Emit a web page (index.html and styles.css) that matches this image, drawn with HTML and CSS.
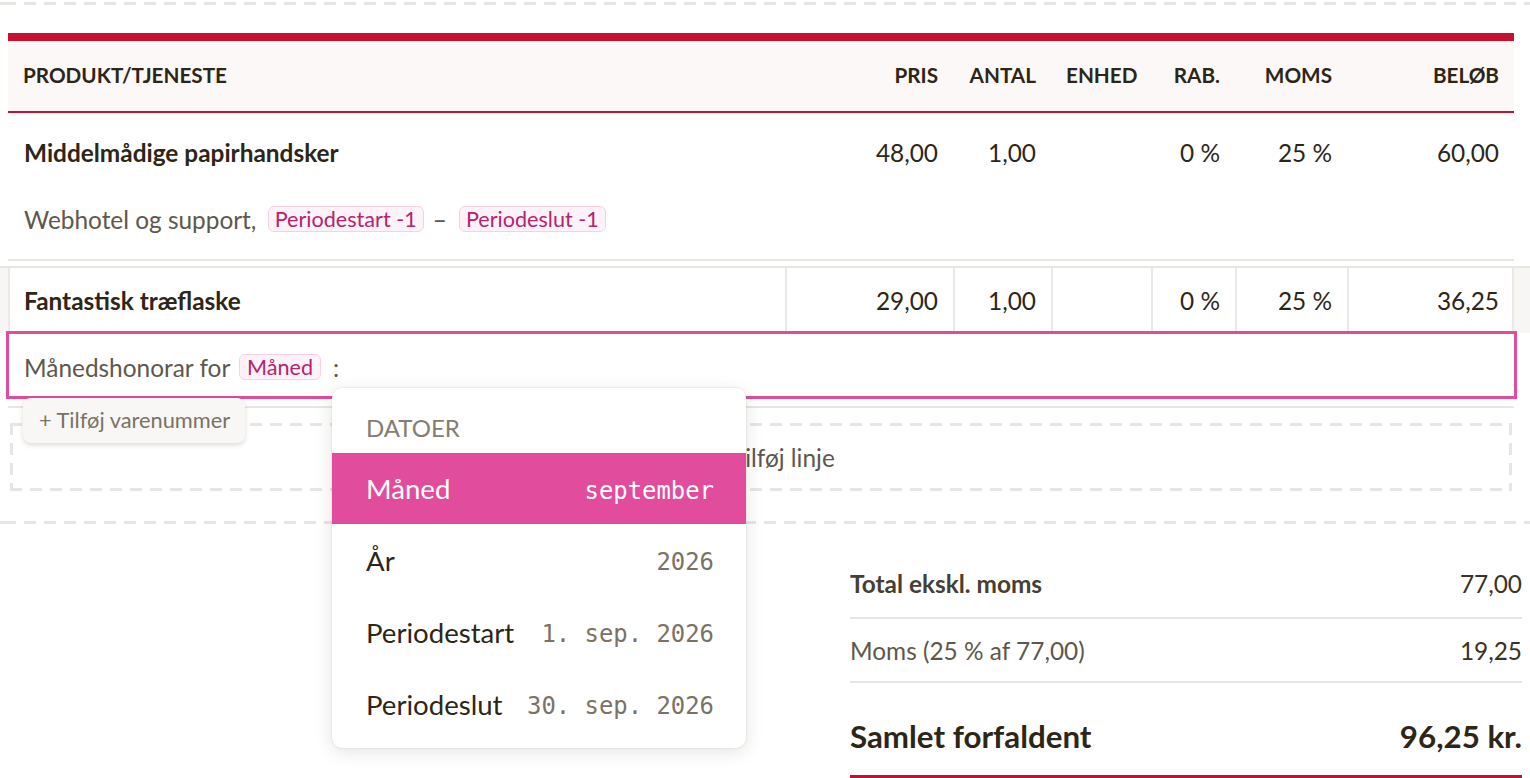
FILE: index.html
```html
<!DOCTYPE html>
<html lang="da">
<head>
<meta charset="utf-8">
<title>Faktura</title>
<link rel="stylesheet" href="styles.css">
</head>
<body>
<div class="dash-line"></div>
<div class="sheet">
  <div class="grid thead">
    <div class="c c-prod">Produkt/tjeneste</div>
    <div class="c">Pris</div>
    <div class="c">Antal</div>
    <div class="c">Enhed</div>
    <div class="c">Rab.</div>
    <div class="c">Moms</div>
    <div class="c">Beløb</div>
  </div>

  <div class="row1">
    <div class="grid main">
      <div class="c c-prod name">Middelmådige papirhandsker</div>
      <div class="c">48,00</div>
      <div class="c">1,00</div>
      <div class="c"></div>
      <div class="c">0 %</div>
      <div class="c">25 %</div>
      <div class="c">60,00</div>
    </div>
    <div class="desc">Webhotel og support, <span class="tag">Periodestart -1</span><span class="sep">–</span><span class="tag">Periodeslut -1</span></div>
  </div>

  <div class="row2">
    <div class="grid main cells">
      <div class="c c-prod name">Fantastisk træflaske</div>
      <div class="c">29,00</div>
      <div class="c">1,00</div>
      <div class="c"></div>
      <div class="c">0 %</div>
      <div class="c">25 %</div>
      <div class="c">36,25</div>
    </div>
  </div>
  <div class="desc focus">Månedshonorar for <span class="tag">Måned</span><span class="colon">:</span></div>
  <div class="row-end"></div>

  <button class="sku">+ Tilføj varenummer</button>

  <div class="add-line">+ Tilføj linje</div>

  <div class="dropdown">
    <div class="dd-label">Datoer</div>
    <div class="dd-item active"><span class="dd-name">Måned</span><span class="dd-val">september</span></div>
    <div class="dd-item"><span class="dd-name">År</span><span class="dd-val">2026</span></div>
    <div class="dd-item"><span class="dd-name">Periodestart</span><span class="dd-val">1. sep. 2026</span></div>
    <div class="dd-item"><span class="dd-name">Periodeslut</span><span class="dd-val">30. sep. 2026</span></div>
  </div>
</div>
<div class="dash-line bottom"></div>

<div class="summary">
  <div class="sum-row strong"><span class="lbl">Total ekskl. moms</span><span class="num">77,00</span></div>
  <div class="sum-row"><span>Moms (25 % af 77,00)</span><span class="num">19,25</span></div>
  <div class="sum-row total"><span>Samlet forfaldent</span><span>96,25 kr.</span></div>
</div>
</body>
</html>
```

FILE: styles.css
```css
* { box-sizing: border-box; }
html, body { margin: 0; padding: 0; background: #fff; }
body {
  font-family: Lato, "Noto Sans", sans-serif;
  color: #2d2617;
  width: 1530px;
  height: 778px;
  overflow: hidden;
}

.dash-line {
  height: 3px;
  margin-top: 2px;
  background: repeating-linear-gradient(90deg, #e8e6e2 0 12px, transparent 12px 20px);
  background-position: 4px 0;
}
.dash-line.bottom { margin-top: 30px; }

.sheet {
  position: relative;
  margin: 28px 16px 0 8px;
}

.grid {
  display: grid;
  grid-template-columns: 777px 168px 98px 100px 84px 112px 167px;
}

.c {
  padding: 0 15px;
  text-align: right;
  white-space: nowrap;
}
.c-prod { text-align: left; padding-left: 16px; }

.thead {
  height: 80px;
  border-top: 8px solid #c8102e;
  border-bottom: 2px solid #c8102e;
  background: #fcf8f7;
  align-items: center;
}
.thead .c {
  font-weight: 700;
  font-size: 20.7px;
  text-transform: uppercase;
  padding-bottom: 2px;
}
.thead .c-prod { padding-left: 15px; }

.main {
  align-items: center;
  font-size: 24.4px;
}
.name { font-weight: 700; }

.row1 { border-bottom: 2px solid #e8e6e2; }
.row1 .main { height: 78px; }

.desc {
  display: flex;
  align-items: center;
  height: 68px;
  padding: 0 16px 12px;
  font-size: 24.4px;
  color: #5e574d;
  white-space: pre;
}

.tag {
  display: inline-block;
  font-size: 21.6px;
  line-height: 22px;
  padding: 1px 6px;
  margin-left: 5px;
  color: #b3246f;
  background: #fdf2f8;
  border: 1px solid #f8d0e4;
  border-radius: 6px;
}
.sep { margin: 0 7px 0 9px; }
.colon { margin-left: 12px; }

.row2 {
  margin: 5px -16px 0 -8px;
  padding: 0 16px 0 8px;
  background: #f7f6f4;
  border-top: 2px solid #e8e6e2;
}
.cells { background: #fff; height: 65px; }
.cells .c {
  height: 100%;
  display: flex;
  align-items: center;
  justify-content: flex-end;
  border-left: 2px solid #ebe9e5;
}
.cells .c-prod { justify-content: flex-start; padding-left: 14px; }
.cells .c:last-child { border-right: 2px solid #ebe9e5; padding-right: 13px; }

.desc.focus {
  position: relative;
  z-index: 1;
  margin: -2px -3px 0 -2px;
  padding: 4px 15px 0;
  border: 3px solid #e14c9c;
  background: #fff;
}
.focus .tag { margin-left: 3px; padding: 1px 7px; }

.row-end {
  height: 2px;
  margin-top: 7px;
  background: #e8e6e2;
}

.sku {
  position: absolute;
  z-index: 2;
  left: 15px;
  top: 365px;
  width: 222px;
  height: 45px;
  padding: 0 0 2px 16px;
  text-align: left;
  font-family: Lato, sans-serif;
  font-size: 21.8px;
  color: #7a7266;
  background: #f9f7f5;
  border: 0;
  border-radius: 8px;
  box-shadow: 0 2px 5px rgba(60, 50, 30, 0.18);
}

.add-line {
  display: flex;
  align-items: center;
  justify-content: center;
  height: 68px;
  margin: 15px 2px 0;
  padding-left: 24px;
  font-size: 24.4px;
  color: #5e574d;
  background:
    repeating-linear-gradient(90deg, #e8e6e2 0 12px, transparent 12px 20px) left top / 100% 3px no-repeat,
    repeating-linear-gradient(90deg, #e8e6e2 0 12px, transparent 12px 20px) left bottom / 100% 3px no-repeat,
    repeating-linear-gradient(180deg, #e8e6e2 0 12px, transparent 12px 20px) left top / 3px 100% no-repeat,
    repeating-linear-gradient(180deg, #e8e6e2 0 12px, transparent 12px 20px) right top / 3px 100% no-repeat;
}

.dropdown {
  position: absolute;
  z-index: 5;
  left: 324px;
  top: 355px;
  width: 414px;
  height: 360px;
  padding-top: 20px;
  background: #fff;
  border-radius: 10px;
  box-shadow: 0 0 0 1px rgba(0, 0, 0, 0.04), 0 4px 18px rgba(40, 30, 20, 0.12);
  overflow: hidden;
}
.dd-label {
  height: 45px;
  padding-left: 34px;
  font-size: 24px;
  text-transform: uppercase;
  color: #857d71;
  line-height: 40px;
}
.dd-item {
  display: flex;
  justify-content: space-between;
  align-items: center;
  height: 72px;
  padding: 0 32px 0 34px;
  font-size: 27.6px;
  color: #2d2617;
}
.dd-val {
  font-family: "DejaVu Sans Mono", "Liberation Mono", monospace;
  font-size: 23.9px;
  color: #7a7266;
  padding-top: 4px;
}
.dd-item.active { background: #e14c9c; color: #fff; height: 71px; }
.dd-item.active .dd-val { color: #fff; }

.summary {
  margin: 28px 8px 0 850px;
}
.sum-row {
  display: flex;
  justify-content: space-between;
  align-items: center;
  height: 64px;
  font-size: 24.4px;
  color: #5e574d;
  border-bottom: 2px solid #e8e6e2;
}
.sum-row.strong { height: 67px; padding-bottom: 3px; }
.sum-row .num { color: #3a3326; }
.sum-row.strong .lbl { font-weight: 700; color: #463f33; }
.sum-row.total {
  height: 96px;
  padding-top: 14px;
  font-size: 31.3px;
  font-weight: 700;
  color: #2d2617;
  border-bottom: 4px solid #c8102e;
}
```
